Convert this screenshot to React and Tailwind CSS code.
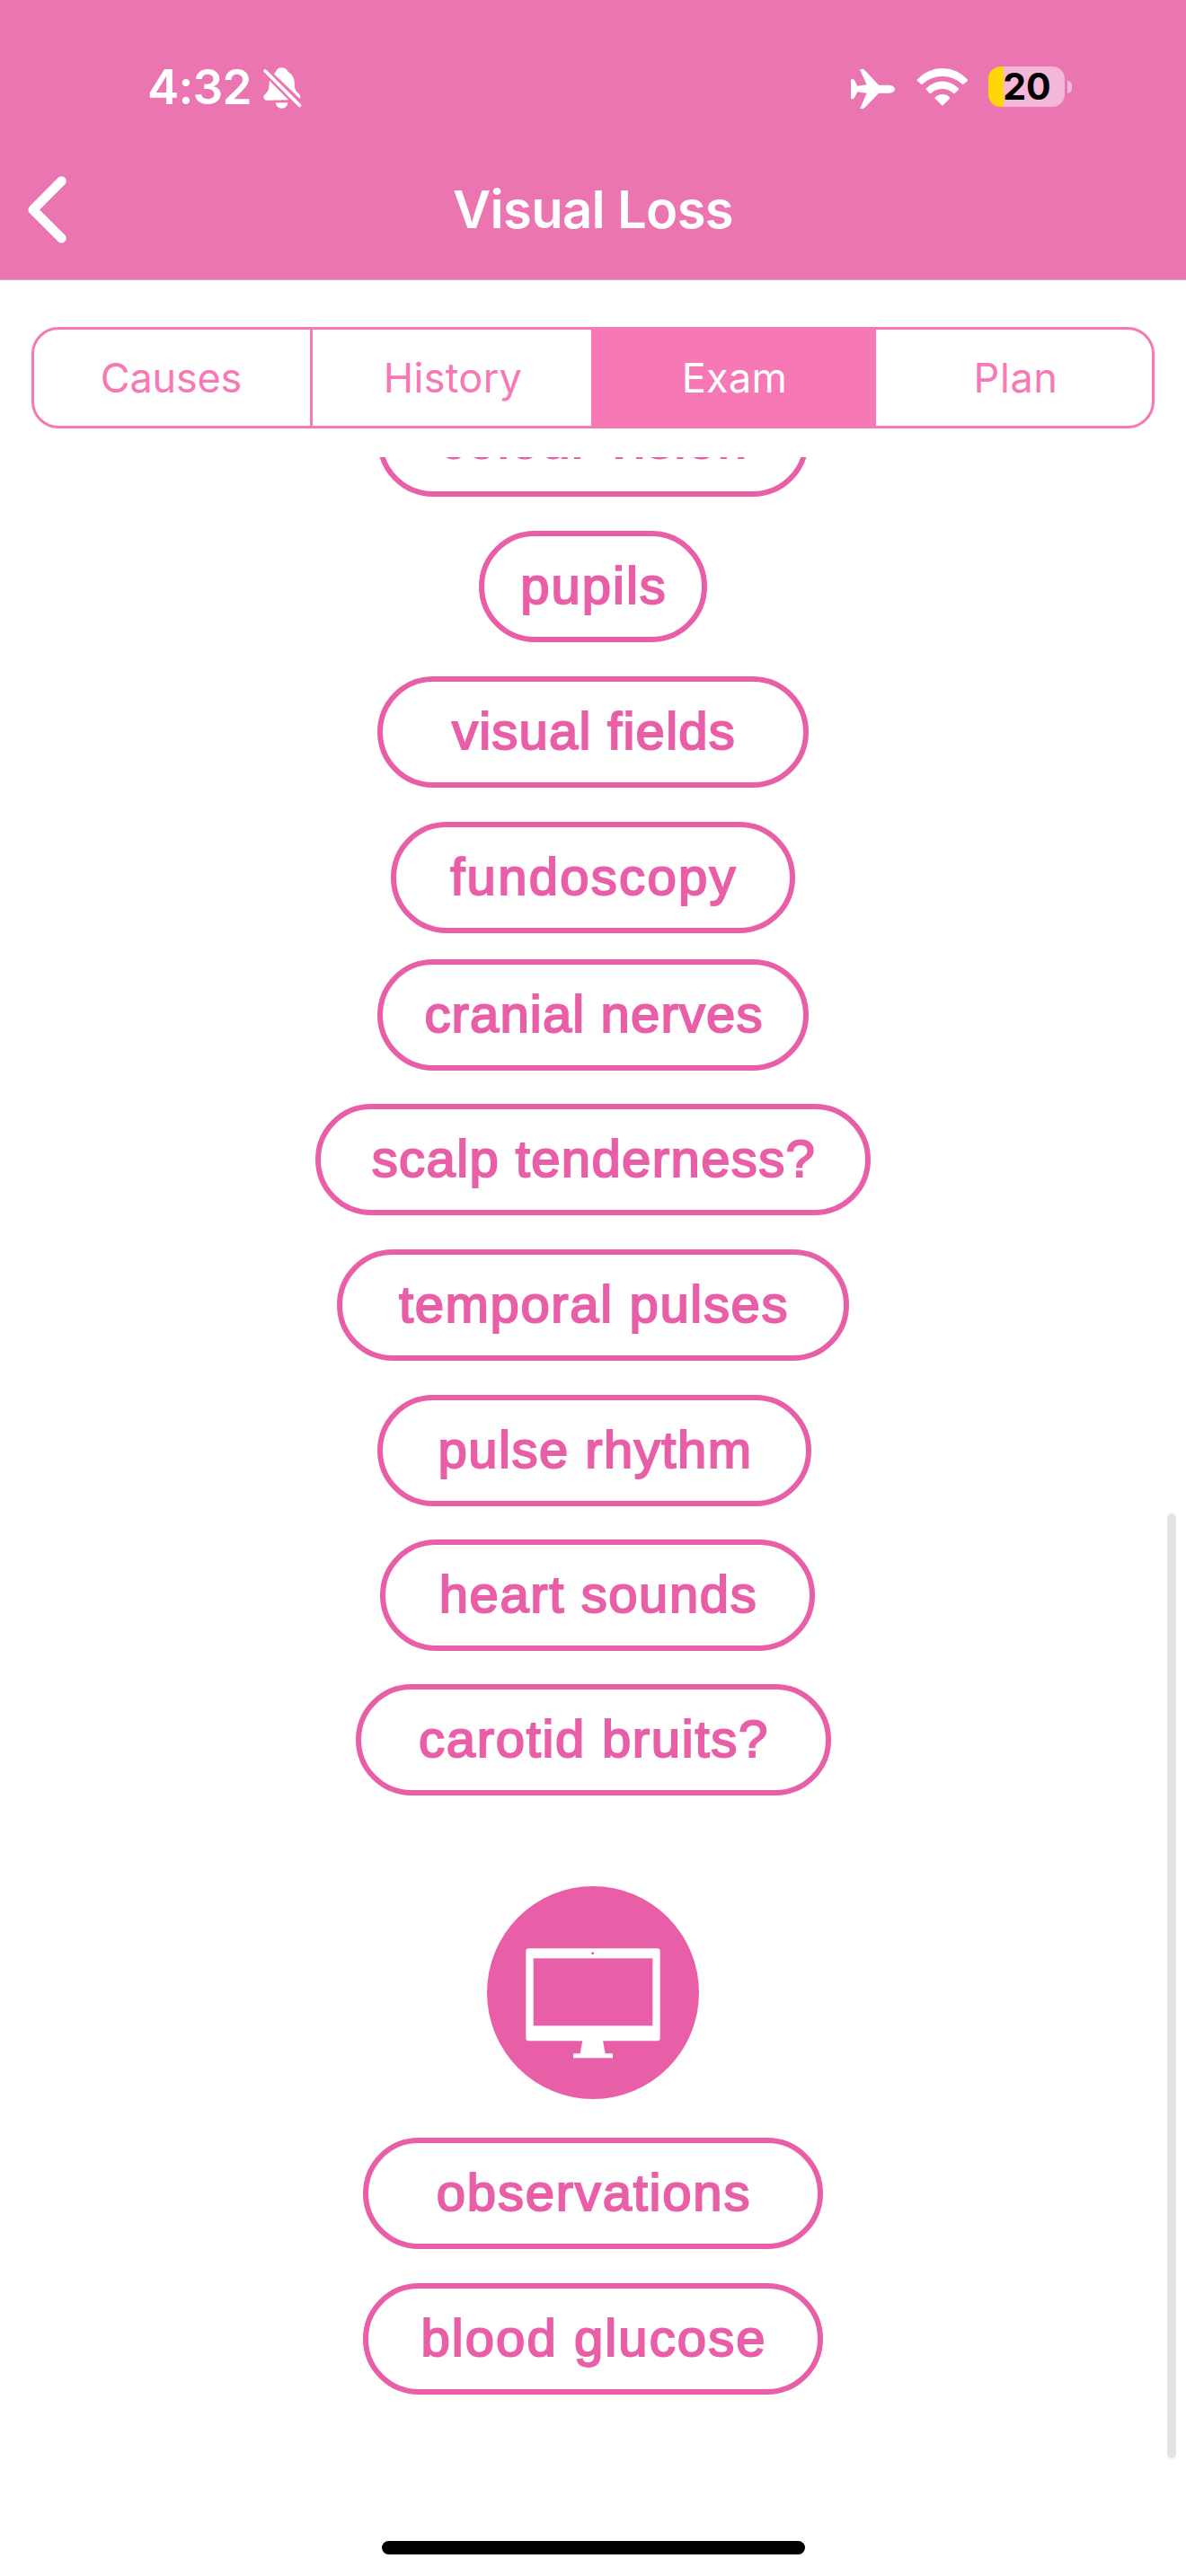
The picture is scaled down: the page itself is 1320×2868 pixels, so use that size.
import React from 'react';

const tabs = [
  { label: 'Causes', cell: 'w-[310px] border-r-[3px] border-[#f678b4] pr-0.5 tracking-[-0.2px]' },
  { label: 'History', cell: 'w-[310px] tracking-[0.3px] pl-0.5' },
  { label: 'Exam', cell: 'w-[317px] bg-[#f678b4] text-white tracking-[0.3px] pl-0.5' },
  { label: 'Plan', cell: 'flex-1 tracking-[0.6px] pl-1' },
];

const examination = [
  { label: 'colour vision', box: '-mt-20 w-[480px] tracking-[1.6px]' },
  { label: 'pupils', box: 'mt-[38px] w-[254px] tracking-[2px]' },
  { label: 'visual fields', box: 'mt-[38px] w-[480px] tracking-[1.25px]' },
  { label: 'fundoscopy', box: 'mt-[38px] w-[450px] tracking-[2.3px]' },
  { label: 'cranial nerves', box: 'mt-[29px] w-[480px] tracking-[1.15px]' },
  { label: 'scalp tenderness?', box: 'mt-[37px] w-[618px] tracking-[1.4px]' },
  { label: 'temporal pulses', box: 'mt-[38px] w-[570px] tracking-[1.65px]' },
  { label: 'pulse rhythm', box: 'mt-[38px] ml-[3px] w-[483px] tracking-[1.5px]' },
  { label: 'heart sounds', box: 'mt-[37px] ml-[10px] w-[484px] tracking-[1.6px]' },
  { label: 'carotid bruits?', box: 'mt-[37px] w-[529px] tracking-[1.7px]' },
];

const bedside = [
  { label: 'observations', box: 'mt-[43px] w-[512px] tracking-[1.8px]' },
  { label: 'blood glucose', box: 'mt-[38px] w-[512px] tracking-[2.1px]' },
];

function Pill({ label, box }) {
  return (
    <button
      className={`flex h-[124px] shrink-0 items-center justify-center whitespace-nowrap rounded-full border-[6px] border-[#e95fa7] pb-[3px] pl-[2px] text-[58px] leading-none text-[#e95fa7] [-webkit-text-stroke:2px_#e95fa7] ${box}`}
    >
      {label}
    </button>
  );
}

function BellOff() {
  return (
    <svg viewBox="878 105 128 138" className="ml-[13px] h-[46px] w-[43px]" fill="white">
      <path d="M913 127C922 122 920 106 939 106C957 106 957 119 964 123C977 131 982 145 982 160C982 180 986 184 996 193C1001 198 1003 205 1000 210Z" />
      <path d="M898 149L962 214L892 215C880 215 875 205 881 198C892 187 896 182 897 165Z" />
      <path d="M919 223H960C957 236 950 242 939 242C929 242 921 236 919 223Z" />
      <path d="M884 117L999 232" stroke="white" strokeWidth="11" strokeLinecap="round" />
    </svg>
  );
}

function Plane() {
  return (
    <svg viewBox="141 108 147 132" className="mt-[2px] h-[44px] w-[49px]" fill="white">
      <path d="M141 144Q141 141 145 141Q151 141 154 146L163 164L194 160L172 112Q171 108 176 108H181Q186 108 189 113L234 161H268Q288 163 288 175Q288 187 268 188H234L189 235Q185 240 180 240H174Q171 240 173 236L194 188L163 184L154 202Q150 208 144 208Q141 208 141 205Z" />
    </svg>
  );
}

function Wifi() {
  return (
    <svg viewBox="359 105 174 127" className="mb-[2px] ml-[24px] h-[42px] w-[58px]" fill="white">
      <path d="M361 143A113 113 0 0 1 530 143Q533 145 530 147L517 159Q515 161 513 159A98 98 0 0 0 378 159Q376 161 374 159L361 147Q358 145 361 143Z" />
      <path d="M391 173A74 74 0 0 1 500 173Q503 175 500 177L487 190Q485 192 483 190A55 55 0 0 0 407 190Q405 192 403 190L391 177Q388 175 391 173Z" />
      <path d="M421 203A35 35 0 0 1 470 203Q472 205 470 207L448 230Q446 232 444 230L421 207Q419 205 421 203Z" />
    </svg>
  );
}

function Battery() {
  return (
    <div className="mb-[2px] ml-[22px] flex items-center gap-[3px]">
      <div className="flex h-[45px] w-[85px] items-center justify-center rounded-[14px] bg-[linear-gradient(to_right,#ffd60a_17px,#f5b7d7_17px)] pl-px text-[41px] font-bold leading-[45px] text-black">
        20
      </div>
      <div className="h-[14px] w-[5px] rounded-r-full bg-[#f5b7d7]" />
    </div>
  );
}

export default function App() {
  return (
    <div className="relative flex h-[2868px] w-[1320px] flex-col overflow-hidden bg-white font-['Inter',sans-serif]">
      <header className="h-[312px] shrink-0 border-b border-[#c9b3bf] bg-[#eb75b0] text-white">
        <div className="flex h-[195px] items-center pl-[164px] pr-[127px]">
          <span className="text-[53px] font-semibold leading-none tracking-[-0.8px]">4:32</span>
          <BellOff />
          <div className="ml-auto flex items-center">
            <Plane />
            <Wifi />
            <Battery />
          </div>
        </div>
        <div className="grid h-[77px] grid-cols-[1fr_auto_1fr] items-center">
          <svg viewBox="0 0 43 75" className="ml-[31px] h-[75px] w-[43px]" fill="none" stroke="white" strokeWidth="10.5" strokeLinecap="round" strokeLinejoin="round">
            <path d="M37.5 5.5L5.7 37.5L37.5 69.3" />
          </svg>
          <h1 className="pb-[2px] text-[58px] font-semibold leading-none tracking-[-0.7px]">Visual Loss</h1>
        </div>
      </header>

      <nav className="mx-[35px] mt-[52px] flex h-[113px] shrink-0 overflow-hidden rounded-[30px] border-[3px] border-[#f678b4] text-[45px] leading-none text-[#f678b4]">
        {tabs.map(({ label, cell }) => (
          <button key={label} className={`flex items-center justify-center ${cell}`}>
            {label}
          </button>
        ))}
      </nav>

      <main className="mt-8 flex min-h-0 flex-1 flex-col items-center overflow-hidden font-['Liberation_Sans',Arial,sans-serif]">
        {examination.map((item) => (
          <Pill key={item.label} {...item} />
        ))}
        <svg viewBox="66 60 708 711" className="mt-[101px] h-[237px] w-[236px] shrink-0">
          <ellipse cx="420" cy="415.5" rx="354" ry="355.5" fill="#e95fa7" />
          <rect x="196" y="268" width="448" height="309" rx="9" fill="white" />
          <rect x="221" y="301" width="398" height="225" fill="#e95fa7" />
          <circle cx="419" cy="284" r="4.5" fill="#e95fa7" />
          <path d="M385 576H453L461 619H486V634H354V619H377Z" fill="white" />
        </svg>
        {bedside.map((item) => (
          <Pill key={item.label} {...item} />
        ))}
      </main>

      <div className="absolute right-[11px] top-[1685px] h-[1052px] w-[10px] rounded-full bg-[#e3e3e3]" />
      <div className="absolute bottom-6 left-[425px] h-[15px] w-[471px] rounded-full bg-black" />
    </div>
  );
}
